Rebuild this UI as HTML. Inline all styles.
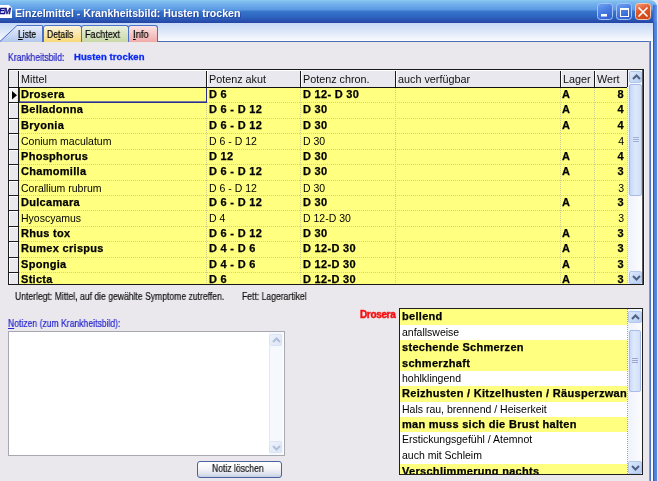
<!DOCTYPE html>
<html><head><meta charset="utf-8"><style>
*{margin:0;padding:0;box-sizing:border-box}
html,body{width:658px;height:481px;overflow:hidden}
body{position:relative;background:#eae8ed;font-family:"Liberation Sans",sans-serif;color:#000}
.a{position:absolute}
.t{position:absolute;white-space:nowrap;line-height:1;will-change:transform}
.sm{font-size:10px;letter-spacing:0;transform:scaleX(0.86);transform-origin:0 0;-webkit-text-stroke:0.2px currentColor}
.cell{font-size:10.5px}
.b{font-weight:bold;font-size:11px;letter-spacing:0.3px;-webkit-text-stroke:0.25px #000}
</style></head><body>

<div class="a" style="left:0;top:0;width:657px;height:23px;border-top-right-radius:7px;background:linear-gradient(#8ccaf2 0px,#7cbaee 2px,#68a8ea 6px,#5a98e2 10px,#3a78cc 11px,#3470c8 13px,#2e64c0 17px,#2a54b2 20px,#2444a2 23px)"></div>
<div class="a" style="left:653px;top:5px;width:4px;height:18px;background:linear-gradient(90deg,#3a66d0,#6a9ef0)"></div>
<div class="a" style="left:657px;top:0;width:1px;height:22px;background:#e4e8f4"></div>
<svg class="a" style="left:0;top:4px" width="13" height="15"><path d="M0 1 L9 1 L12 4 L12 14 L0 14 Z" fill="#fff"/></svg>
<div class="t" style="left:-1px;top:7px;font-size:8.5px;font-weight:bold;font-style:italic;color:#14148a;letter-spacing:-0.8px;-webkit-text-stroke:0.3px #14148a">EM</div>
<div class="t" style="left:15px;top:7.5px;font-size:10.6px;font-weight:bold;color:#fff;letter-spacing:0px;text-shadow:1px 1px 0 #2a4aa0">Einzelmittel - Krankheitsbild: Husten trocken</div>
<svg class="a" style="left:596px;top:2px" width="58" height="19">
<defs>
<linearGradient id="bb" x1="0" y1="0" x2="0.4" y2="1"><stop offset="0" stop-color="#74a6f2"/><stop offset="0.5" stop-color="#4c80e4"/><stop offset="1" stop-color="#3464d4"/></linearGradient>
<linearGradient id="rb" x1="0" y1="0" x2="0.4" y2="1"><stop offset="0" stop-color="#f4a080"/><stop offset="0.5" stop-color="#e05828"/><stop offset="1" stop-color="#d04818"/></linearGradient>
</defs>
<rect x="1.5" y="1.5" width="15" height="16" rx="3" fill="url(#bb)" stroke="#a4c4f6" stroke-width="1"/>
<rect x="5" y="12" width="6" height="2.5" fill="#fff"/>
<rect x="20.5" y="1.5" width="15" height="16" rx="3" fill="url(#bb)" stroke="#a4c4f6" stroke-width="1"/>
<rect x="24.5" y="6.5" width="8" height="8" fill="none" stroke="#fff" stroke-width="1"/>
<rect x="24" y="6" width="9" height="2" fill="#fff"/>
<rect x="39.5" y="1.5" width="15" height="16" rx="3" fill="url(#rb)" stroke="#f8c8b0" stroke-width="1"/>
<path d="M43 6 L51 14 M51 6 L43 14" stroke="#fff" stroke-width="1.7" stroke-linecap="round"/>
</svg>
<div class="a" style="left:653px;top:22px;width:1px;height:459px;background:#3858b0"></div>
<div class="a" style="left:654px;top:22px;width:3px;height:459px;background:linear-gradient(90deg,#4a7cd8,#5a8ce0)"></div>
<div class="a" style="left:657px;top:22px;width:1px;height:459px;background:#dce8f8"></div>
<div class="a" style="left:651px;top:42px;width:2px;height:439px;background:#fbfbf6"></div>
<div class="a" style="left:644px;top:69px;width:1px;height:216px;background:#f6f6f8"></div>
<div class="a" style="left:0;top:23px;width:653px;height:18px;background:linear-gradient(#c4d8f6,#e4ecfa 60%,#f4f6fc 90%,#fff)"></div>
<div class="a" style="left:0;top:41px;width:651px;height:1px;background:#4a6cc0"></div>
<div class="a" style="left:0;top:42px;width:649px;height:1px;background:#ebe8e2"></div>
<div class="a" style="left:649px;top:41px;width:1px;height:440px;background:#7a98dc"></div>
<div class="a" style="left:650px;top:41px;width:1px;height:440px;background:#5070c8"></div>
<svg class="a" style="left:0;top:25px" width="44" height="17"><path d="M0 16 L17 0.5 L42.5 0.5 L42.5 17 L0 17 Z" fill="#c9d8f4" stroke="none"/><defs><linearGradient id="lg" x1="0" y1="0" x2="0" y2="1"><stop offset="0" stop-color="#e8eefa"/><stop offset="1" stop-color="#b4c8ee"/></linearGradient></defs><path d="M0 16 L17 0.5 L42.5 0.5 L42.5 17 L0 17 Z" fill="url(#lg)"/><path d="M0 16.5 L17 0.5 L42.5 0.5 L42.5 17" fill="none" stroke="#4a70cc" stroke-width="1"/></svg>
<div class="a" style="left:43px;top:25px;width:39px;height:17px;border:1px solid #4a70cc;border-bottom:none;border-radius:3px 3px 0 0;background:linear-gradient(#fcf4dc,#f8d878)"></div>
<div class="a" style="left:81px;top:25px;width:48px;height:17px;border:1px solid #4a70cc;border-bottom:none;border-radius:3px 3px 0 0;background:linear-gradient(#eaf0dc,#c8d8a8)"></div>
<div class="a" style="left:128px;top:25px;width:30px;height:17px;border:1px solid #4a70cc;border-bottom:none;border-radius:3px 3px 0 0;background:linear-gradient(#fce4e4,#f0aaaa)"></div>
<div class="t sm" style="left:18px;top:29.5px;color:#000"><u>L</u>iste</div>
<div class="t sm" style="left:47px;top:29.5px;color:#000">De<u>t</u>ails</div>
<div class="t sm" style="left:85px;top:29.5px;color:#000;transform:scaleX(0.91)">Fach<u>t</u>ext</div>
<div class="t sm" style="left:133px;top:29.5px;color:#000;transform:scaleX(0.95)"><u>I</u>nfo</div>
<div class="t sm" style="left:8px;top:52.5px;color:#1c1cc4">Krankheitsbild:</div>
<div class="t" style="left:74px;top:52px;color:#0828f4;font-size:9.5px;font-weight:bold;letter-spacing:0.1px;-webkit-text-stroke:0.3px #0828f4">Husten trocken</div>
<div class="a" style="left:8px;top:69px;width:636px;height:216px;border:1px solid #1a1a1a;background:#ffff80"></div>
<div class="a" style="left:9px;top:70px;width:618px;height:17px;background:#e9e8ee"></div>
<div class="a" style="left:9px;top:87px;width:618px;height:1px;background:#101010"></div>
<div class="a" style="left:18px;top:70px;width:1px;height:17px;background:#1a1a1a"></div>
<div class="a" style="left:19px;top:70px;width:1px;height:17px;background:#fff"></div>
<div class="a" style="left:206px;top:70px;width:1px;height:17px;background:#1a1a1a"></div>
<div class="a" style="left:207px;top:70px;width:1px;height:17px;background:#fff"></div>
<div class="a" style="left:300px;top:70px;width:1px;height:17px;background:#1a1a1a"></div>
<div class="a" style="left:301px;top:70px;width:1px;height:17px;background:#fff"></div>
<div class="a" style="left:395px;top:70px;width:1px;height:17px;background:#1a1a1a"></div>
<div class="a" style="left:396px;top:70px;width:1px;height:17px;background:#fff"></div>
<div class="a" style="left:560px;top:70px;width:1px;height:17px;background:#1a1a1a"></div>
<div class="a" style="left:561px;top:70px;width:1px;height:17px;background:#fff"></div>
<div class="a" style="left:594px;top:70px;width:1px;height:17px;background:#1a1a1a"></div>
<div class="a" style="left:595px;top:70px;width:1px;height:17px;background:#fff"></div>
<div class="a" style="left:627px;top:70px;width:1px;height:17px;background:#1a1a1a"></div>
<div class="a" style="left:628px;top:70px;width:1px;height:17px;background:#fff"></div>
<div class="a" style="left:9px;top:70px;width:618px;height:1px;background:#fff"></div>
<div class="t" style="left:21px;top:74px;color:#111;font-size:10.8px">Mittel</div>
<div class="t" style="left:209px;top:74px;color:#111;font-size:10.8px">Potenz akut</div>
<div class="t" style="left:303px;top:74px;color:#111;font-size:10.8px">Potenz chron.</div>
<div class="t" style="left:398px;top:74px;color:#111;font-size:10.8px">auch verfügbar</div>
<div class="t" style="left:563px;top:74px;color:#111;font-size:10.8px">Lager</div>
<div class="t" style="left:597px;top:74px;color:#111;font-size:10.8px">Wert</div>
<div class="a" style="left:0;top:0;width:658px;height:284px;overflow:hidden">
<div class="a" style="left:9px;top:88px;width:9px;height:196px;background:#e9e8ee"></div>
<div class="a" style="left:18px;top:88px;width:1px;height:196px;background:#1a1a1a"></div>
<div class="a" style="left:9px;top:102px;width:9px;height:1px;background:#1a1a1a"></div>
<div class="a" style="left:9px;top:88px;width:9px;height:1px;background:#fff"></div>
<div class="a" style="left:9px;top:88px;width:1px;height:14px;background:#fff"></div>
<div class="a" style="left:19px;top:102px;width:608px;height:1px;background:repeating-linear-gradient(90deg,#d0d094 0 1px,transparent 1px 2px)"></div>
<div class="a" style="left:9px;top:118px;width:9px;height:1px;background:#1a1a1a"></div>
<div class="a" style="left:9px;top:103px;width:9px;height:1px;background:#fff"></div>
<div class="a" style="left:9px;top:103px;width:1px;height:15px;background:#fff"></div>
<div class="a" style="left:19px;top:118px;width:608px;height:1px;background:repeating-linear-gradient(90deg,#d0d094 0 1px,transparent 1px 2px)"></div>
<div class="a" style="left:9px;top:133px;width:9px;height:1px;background:#1a1a1a"></div>
<div class="a" style="left:9px;top:119px;width:9px;height:1px;background:#fff"></div>
<div class="a" style="left:9px;top:119px;width:1px;height:14px;background:#fff"></div>
<div class="a" style="left:19px;top:133px;width:608px;height:1px;background:repeating-linear-gradient(90deg,#d0d094 0 1px,transparent 1px 2px)"></div>
<div class="a" style="left:9px;top:149px;width:9px;height:1px;background:#1a1a1a"></div>
<div class="a" style="left:9px;top:134px;width:9px;height:1px;background:#fff"></div>
<div class="a" style="left:9px;top:134px;width:1px;height:15px;background:#fff"></div>
<div class="a" style="left:19px;top:149px;width:608px;height:1px;background:repeating-linear-gradient(90deg,#d0d094 0 1px,transparent 1px 2px)"></div>
<div class="a" style="left:9px;top:164px;width:9px;height:1px;background:#1a1a1a"></div>
<div class="a" style="left:9px;top:150px;width:9px;height:1px;background:#fff"></div>
<div class="a" style="left:9px;top:150px;width:1px;height:14px;background:#fff"></div>
<div class="a" style="left:19px;top:164px;width:608px;height:1px;background:repeating-linear-gradient(90deg,#d0d094 0 1px,transparent 1px 2px)"></div>
<div class="a" style="left:9px;top:180px;width:9px;height:1px;background:#1a1a1a"></div>
<div class="a" style="left:9px;top:165px;width:9px;height:1px;background:#fff"></div>
<div class="a" style="left:9px;top:165px;width:1px;height:15px;background:#fff"></div>
<div class="a" style="left:19px;top:180px;width:608px;height:1px;background:repeating-linear-gradient(90deg,#d0d094 0 1px,transparent 1px 2px)"></div>
<div class="a" style="left:9px;top:195px;width:9px;height:1px;background:#1a1a1a"></div>
<div class="a" style="left:9px;top:181px;width:9px;height:1px;background:#fff"></div>
<div class="a" style="left:9px;top:181px;width:1px;height:14px;background:#fff"></div>
<div class="a" style="left:19px;top:195px;width:608px;height:1px;background:repeating-linear-gradient(90deg,#d0d094 0 1px,transparent 1px 2px)"></div>
<div class="a" style="left:9px;top:210px;width:9px;height:1px;background:#1a1a1a"></div>
<div class="a" style="left:9px;top:196px;width:9px;height:1px;background:#fff"></div>
<div class="a" style="left:9px;top:196px;width:1px;height:14px;background:#fff"></div>
<div class="a" style="left:19px;top:210px;width:608px;height:1px;background:repeating-linear-gradient(90deg,#d0d094 0 1px,transparent 1px 2px)"></div>
<div class="a" style="left:9px;top:226px;width:9px;height:1px;background:#1a1a1a"></div>
<div class="a" style="left:9px;top:211px;width:9px;height:1px;background:#fff"></div>
<div class="a" style="left:9px;top:211px;width:1px;height:15px;background:#fff"></div>
<div class="a" style="left:19px;top:226px;width:608px;height:1px;background:repeating-linear-gradient(90deg,#d0d094 0 1px,transparent 1px 2px)"></div>
<div class="a" style="left:9px;top:241px;width:9px;height:1px;background:#1a1a1a"></div>
<div class="a" style="left:9px;top:227px;width:9px;height:1px;background:#fff"></div>
<div class="a" style="left:9px;top:227px;width:1px;height:14px;background:#fff"></div>
<div class="a" style="left:19px;top:241px;width:608px;height:1px;background:repeating-linear-gradient(90deg,#d0d094 0 1px,transparent 1px 2px)"></div>
<div class="a" style="left:9px;top:257px;width:9px;height:1px;background:#1a1a1a"></div>
<div class="a" style="left:9px;top:242px;width:9px;height:1px;background:#fff"></div>
<div class="a" style="left:9px;top:242px;width:1px;height:15px;background:#fff"></div>
<div class="a" style="left:19px;top:257px;width:608px;height:1px;background:repeating-linear-gradient(90deg,#d0d094 0 1px,transparent 1px 2px)"></div>
<div class="a" style="left:9px;top:272px;width:9px;height:1px;background:#1a1a1a"></div>
<div class="a" style="left:9px;top:258px;width:9px;height:1px;background:#fff"></div>
<div class="a" style="left:9px;top:258px;width:1px;height:14px;background:#fff"></div>
<div class="a" style="left:19px;top:272px;width:608px;height:1px;background:repeating-linear-gradient(90deg,#d0d094 0 1px,transparent 1px 2px)"></div>
<div class="a" style="left:9px;top:288px;width:9px;height:1px;background:#1a1a1a"></div>
<div class="a" style="left:9px;top:273px;width:9px;height:1px;background:#fff"></div>
<div class="a" style="left:9px;top:273px;width:1px;height:15px;background:#fff"></div>
<div class="a" style="left:19px;top:288px;width:608px;height:1px;background:repeating-linear-gradient(90deg,#d0d094 0 1px,transparent 1px 2px)"></div>
<div class="a" style="left:206px;top:88px;width:1px;height:196px;background:repeating-linear-gradient(180deg,#d0d094 0 1px,transparent 1px 2px)"></div>
<div class="a" style="left:300px;top:88px;width:1px;height:196px;background:repeating-linear-gradient(180deg,#d0d094 0 1px,transparent 1px 2px)"></div>
<div class="a" style="left:395px;top:88px;width:1px;height:196px;background:repeating-linear-gradient(180deg,#d0d094 0 1px,transparent 1px 2px)"></div>
<div class="a" style="left:560px;top:88px;width:1px;height:196px;background:repeating-linear-gradient(180deg,#d0d094 0 1px,transparent 1px 2px)"></div>
<div class="a" style="left:594px;top:88px;width:1px;height:196px;background:repeating-linear-gradient(180deg,#d0d094 0 1px,transparent 1px 2px)"></div>
<div class="a" style="left:627px;top:88px;width:1px;height:196px;background:repeating-linear-gradient(180deg,#d0d094 0 1px,transparent 1px 2px)"></div>
<div class="a" style="left:10px;top:89px;width:7px;height:13px;background:#f4f4f6"></div>
<svg class="a" style="left:12px;top:91px" width="6" height="10"><path d="M0 0 L5 4.25 L0 8.5 Z" fill="#000"/></svg>
<div class="a" style="left:19px;top:88px;width:188px;height:15px;border:1px solid #303088;border-top:none;border-left:1px solid #303088"></div>
<div class="a" style="left:20px;top:101px;width:186px;height:1px;background:#7a7aa4"></div>
<div class="t b" style="left:21px;top:89px">Drosera</div>
<div class="t b" style="left:209px;top:89px">D 6</div>
<div class="t b" style="left:303px;top:89px">D 12- D 30</div>
<div class="t b" style="left:562px;top:89px">A</div>
<div class="t b" style="left:594px;width:30px;text-align:right;top:89px">8</div>
<div class="t b" style="left:21px;top:104px">Belladonna</div>
<div class="t b" style="left:209px;top:104px">D 6 - D 12</div>
<div class="t b" style="left:303px;top:104px">D 30</div>
<div class="t b" style="left:562px;top:104px">A</div>
<div class="t b" style="left:594px;width:30px;text-align:right;top:104px">4</div>
<div class="t b" style="left:21px;top:120px">Bryonia</div>
<div class="t b" style="left:209px;top:120px">D 6 - D 12</div>
<div class="t b" style="left:303px;top:120px">D 30</div>
<div class="t b" style="left:562px;top:120px">A</div>
<div class="t b" style="left:594px;width:30px;text-align:right;top:120px">4</div>
<div class="t cell" style="left:21px;top:136px">Conium maculatum</div>
<div class="t cell" style="left:209px;top:136px">D 6 - D 12</div>
<div class="t cell" style="left:303px;top:136px">D 30</div>
<div class="t cell" style="left:594px;width:30px;text-align:right;top:136px">4</div>
<div class="t b" style="left:21px;top:151px">Phosphorus</div>
<div class="t b" style="left:209px;top:151px">D 12</div>
<div class="t b" style="left:303px;top:151px">D 30</div>
<div class="t b" style="left:562px;top:151px">A</div>
<div class="t b" style="left:594px;width:30px;text-align:right;top:151px">4</div>
<div class="t b" style="left:21px;top:166px">Chamomilla</div>
<div class="t b" style="left:209px;top:166px">D 6 - D 12</div>
<div class="t b" style="left:303px;top:166px">D 30</div>
<div class="t b" style="left:562px;top:166px">A</div>
<div class="t b" style="left:594px;width:30px;text-align:right;top:166px">3</div>
<div class="t cell" style="left:21px;top:183px">Corallium rubrum</div>
<div class="t cell" style="left:209px;top:183px">D 6 - D 12</div>
<div class="t cell" style="left:303px;top:183px">D 30</div>
<div class="t cell" style="left:594px;width:30px;text-align:right;top:183px">3</div>
<div class="t b" style="left:21px;top:197px">Dulcamara</div>
<div class="t b" style="left:209px;top:197px">D 6 - D 12</div>
<div class="t b" style="left:303px;top:197px">D 30</div>
<div class="t b" style="left:562px;top:197px">A</div>
<div class="t b" style="left:594px;width:30px;text-align:right;top:197px">3</div>
<div class="t cell" style="left:21px;top:213px">Hyoscyamus</div>
<div class="t cell" style="left:209px;top:213px">D 4</div>
<div class="t cell" style="left:303px;top:213px">D 12-D 30</div>
<div class="t cell" style="left:594px;width:30px;text-align:right;top:213px">3</div>
<div class="t b" style="left:21px;top:228px">Rhus tox</div>
<div class="t b" style="left:209px;top:228px">D 6 - D 12</div>
<div class="t b" style="left:303px;top:228px">D 30</div>
<div class="t b" style="left:562px;top:228px">A</div>
<div class="t b" style="left:594px;width:30px;text-align:right;top:228px">3</div>
<div class="t b" style="left:21px;top:243px">Rumex crispus</div>
<div class="t b" style="left:209px;top:243px">D 4 - D 6</div>
<div class="t b" style="left:303px;top:243px">D 12-D 30</div>
<div class="t b" style="left:562px;top:243px">A</div>
<div class="t b" style="left:594px;width:30px;text-align:right;top:243px">3</div>
<div class="t b" style="left:21px;top:259px">Spongia</div>
<div class="t b" style="left:209px;top:259px">D 4 - D 6</div>
<div class="t b" style="left:303px;top:259px">D 12-D 30</div>
<div class="t b" style="left:562px;top:259px">A</div>
<div class="t b" style="left:594px;width:30px;text-align:right;top:259px">3</div>
<div class="t b" style="left:21px;top:274px">Sticta</div>
<div class="t b" style="left:209px;top:274px">D 6</div>
<div class="t b" style="left:303px;top:274px">D 12-D 30</div>
<div class="t b" style="left:562px;top:274px">A</div>
<div class="t b" style="left:594px;width:30px;text-align:right;top:274px">3</div>
</div>
<div class="a" style="left:628px;top:70px;width:15px;height:214px;background:linear-gradient(90deg,#eef2fa,#fdfdff)"></div>
<div class="a" style="left:629px;top:71px;width:13px;height:12px;border:1px solid #b4c8ec;border-radius:2px;background:linear-gradient(135deg,#dce8fc,#b8cdf2)"><svg class="a" style="left:0;top:0" width="13" height="11"><path d="M3 7 L6.5 3.5 L10 7" fill="none" stroke="#4d6185" stroke-width="2"/></svg></div>
<div class="a" style="left:629px;top:271px;width:13px;height:13px;border:1px solid #b4c8ec;border-radius:2px;background:linear-gradient(135deg,#dce8fc,#b8cdf2)"><svg class="a" style="left:0;top:0" width="13" height="11"><path d="M3 4 L6.5 7.5 L10 4" fill="none" stroke="#4d6185" stroke-width="2"/></svg></div>
<div class="a" style="left:629px;top:84px;width:13px;height:112px;border:1px solid #a8bce8;border-radius:2px;background:linear-gradient(90deg,#c4d6f8,#dce8fc 45%,#d0def8)"></div>
<div class="a" style="left:633px;top:137px;width:6px;height:5px;background:repeating-linear-gradient(180deg,#a0b0d4 0 1px,transparent 1px 2px)"></div>
<div class="a" style="left:642px;top:70px;width:1px;height:214px;background:#5a5a60"></div>
<div class="t sm" style="left:15px;top:291.5px;color:#111">Unterlegt: Mittel, auf die gewählte Symptome zutreffen.</div>
<div class="t sm" style="left:242px;top:291.5px;color:#111">Fett: Lagerartikel</div>
<div class="t sm" style="left:8px;top:319px;color:#2424d0"><u>N</u>otizen (zum Krankheitsbild):</div>
<div class="a" style="left:8px;top:331px;width:277px;height:125px;border:1px solid #a8a8b0;background:#fff"></div>
<div class="a" style="left:269px;top:332px;width:14px;height:123px;background:#f5f8fd"></div>
<div class="a" style="left:269px;top:346px;width:1px;height:95px;background:#e2e8f4"></div>
<div class="a" style="left:269px;top:334px;width:13px;height:12px;border:1px solid #dae4f4;border-radius:2px;background:linear-gradient(135deg,#eef3fc,#dde6f6)"><svg class="a" style="left:0;top:0" width="13" height="11"><path d="M3 7 L6.5 3.5 L10 7" fill="none" stroke="#b0c0da" stroke-width="2"/></svg></div>
<div class="a" style="left:269px;top:441px;width:13px;height:12px;border:1px solid #dae4f4;border-radius:2px;background:linear-gradient(135deg,#eef3fc,#dde6f6)"><svg class="a" style="left:0;top:0" width="13" height="11"><path d="M3 4 L6.5 7.5 L10 4" fill="none" stroke="#b0c0da" stroke-width="2"/></svg></div>
<div class="a" style="left:197px;top:461px;width:85px;height:17px;border:1px solid #4a62a0;border-radius:3px;background:linear-gradient(#ffffff,#f4f5f8 45%,#dde2ee 80%,#c4cde2)"></div>
<div class="t sm" style="left:212px;top:464px;color:#111">Notiz löschen</div>
<div class="t" style="left:360px;top:310px;color:#f41010;font-size:10px;font-weight:bold;letter-spacing:-0.35px;-webkit-text-stroke:0.45px #f41010">Drosera</div>
<div class="a" style="left:399px;top:308px;width:244px;height:167px;border:1px solid #202020;background:#fff;overflow:hidden">
<div class="a" style="left:0;top:0px;width:227px;height:16px;background:#ffff80;overflow:hidden"><div class="t b" style="left:2px;top:2px">bellend</div></div>
<div class="a" style="left:0;top:16px;width:227px;height:15px;background:#fff;overflow:hidden"><div class="t cell" style="left:2px;top:1.5px">anfallsweise</div></div>
<div class="a" style="left:0;top:31px;width:227px;height:16px;background:#ffff80;overflow:hidden"><div class="t b" style="left:2px;top:2px">stechende Schmerzen</div></div>
<div class="a" style="left:0;top:47px;width:227px;height:15px;background:#ffff80;overflow:hidden"><div class="t b" style="left:2px;top:2px">schmerzhaft</div></div>
<div class="a" style="left:0;top:62px;width:227px;height:15px;background:#fff;overflow:hidden"><div class="t cell" style="left:2px;top:1.5px">hohlklingend</div></div>
<div class="a" style="left:0;top:77px;width:227px;height:16px;background:#ffff80;overflow:hidden"><div class="t b" style="left:2px;top:2px">Reizhusten / Kitzelhusten / Räusperzwang</div></div>
<div class="a" style="left:0;top:93px;width:227px;height:15px;background:#fff;overflow:hidden"><div class="t cell" style="left:2px;top:1.5px">Hals rau, brennend / Heiserkeit</div></div>
<div class="a" style="left:0;top:108px;width:227px;height:15px;background:#ffff80;overflow:hidden"><div class="t b" style="left:2px;top:2px">man muss sich die Brust halten</div></div>
<div class="a" style="left:0;top:123px;width:227px;height:16px;background:#fff;overflow:hidden"><div class="t cell" style="left:2px;top:1.5px">Erstickungsgefühl / Atemnot</div></div>
<div class="a" style="left:0;top:139px;width:227px;height:16px;background:#fff;overflow:hidden"><div class="t cell" style="left:2px;top:1.5px">auch mit Schleim</div></div>
<div class="a" style="left:0;top:155px;width:227px;height:15px;background:#ffff80;overflow:hidden"><div class="t b" style="left:2px;top:2px">Verschlimmerung nachts</div></div>
<div class="a" style="left:227px;top:0;width:1px;height:166px;background:repeating-linear-gradient(180deg,#a0a0c0 0 1px,transparent 1px 2px)"></div>
<div class="a" style="left:228px;top:0;width:15px;height:166px;background:linear-gradient(90deg,#eef2fa,#fdfdff)"></div>
</div>
<div class="a" style="left:628px;top:311px;width:14px;height:12px;border:1px solid #b4c8ec;border-radius:2px;background:linear-gradient(135deg,#dce8fc,#b8cdf2)"><svg class="a" style="left:0;top:0" width="13" height="11"><path d="M3 7 L6.5 3.5 L10 7" fill="none" stroke="#4d6185" stroke-width="2"/></svg></div>
<div class="a" style="left:628px;top:461px;width:14px;height:13px;border:1px solid #b4c8ec;border-radius:2px;background:linear-gradient(135deg,#dce8fc,#b8cdf2)"><svg class="a" style="left:0;top:0" width="13" height="11"><path d="M3 4 L6.5 7.5 L10 4" fill="none" stroke="#4d6185" stroke-width="2"/></svg></div>
<div class="a" style="left:629px;top:330px;width:12px;height:62px;border:1px solid #a8bce8;border-radius:2px;background:linear-gradient(90deg,#c8d8f8,#e0eafc 40%,#d0def8)"></div>
<div class="a" style="left:632px;top:358px;width:6px;height:5px;background:repeating-linear-gradient(180deg,#98a8d0 0 1px,transparent 1px 2px)"></div>
</body></html>
